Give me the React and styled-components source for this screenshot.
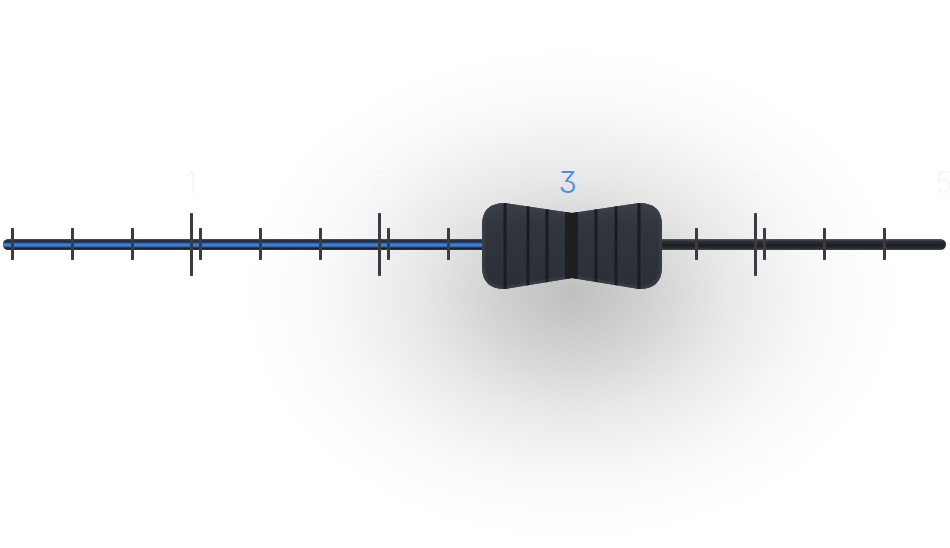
import React from "react";
import styled, { createGlobalStyle } from "styled-components";

const GlobalStyle = createGlobalStyle`
  html, body {
    margin: 0;
    padding: 0;
    background: #ffffff;
    overflow: hidden;
  }
`;

const MAX = 5;
const VALUE = 3;
const SCALE_WIDTH = 941;
const STEP = SCALE_WIDTH / MAX;
const THUMB_W = 182;

const pos = (v) => (v / MAX) * SCALE_WIDTH;

const Page = styled.div`
  width: 950px;
  height: 548px;
  overflow: hidden;
  font-family: Inter, "Noto Sans", sans-serif;
`;

const Scale = styled.div`
  margin: 0 4px 0 3px;
  padding-top: 162px;
  display: flex;
  flex-direction: column;
  gap: 10px;
`;

const LabelRow = styled.div`
  display: grid;
  grid-template-columns: repeat(${MAX}, ${STEP}px);
  height: 40px;
  position: relative;
  z-index: 2;
`;

const LabelCell = styled.div`
  display: flex;
  justify-content: flex-end;
`;

const Label = styled.span`
  transform: translateX(50%);
  font-size: 30px;
  font-weight: 300;
  line-height: 40px;
  font-feature-settings: "cv09";
  color: ${(p) => (p.$active ? "#4a8fe6" : "rgba(246, 246, 246, 0.9)")};
`;

const TrackArea = styled.div`
  display: grid;
  grid-template-rows: 64px;
  grid-template-columns: minmax(0, 1fr);
  align-items: center;
  justify-items: start;

  & > * {
    grid-area: 1 / 1;
  }
`;

const Glow = styled.div`
  width: 660px;
  height: 620px;
  align-self: center;
  background: radial-gradient(
    ellipse 50% 40% at 50% 58%,
    rgba(0, 0, 0, 0.25) 0%,
    rgba(0, 0, 0, 0.18) 22%,
    rgba(0, 0, 0, 0.085) 48%,
    rgba(0, 0, 0, 0.025) 75%,
    rgba(0, 0, 0, 0) 100%
  );
`;

const Track = styled.div`
  width: 100%;
  height: 11px;
  border-radius: 6px;
  background: linear-gradient(
    to bottom,
    #5a5d62 0%,
    #2b2e33 22%,
    #1d1f23 60%,
    #2a2d31 85%,
    #4a4d52 100%
  );
  overflow: hidden;
`;

const Fill = styled.div`
  height: 100%;
  background: linear-gradient(
    to bottom,
    #4b5058 0%,
    #1f2630 22%,
    #2b64b3 40%,
    #4a8ee0 55%,
    #2a5ca4 70%,
    #1a1f27 85%,
    #3a3d42 100%
  );
`;

const TickRow = styled.div`
  display: flex;
  align-items: center;
  height: 64px;
  --tick: ${(p) => (p.$over ? "rgba(58, 61, 66, 0.55)" : "#3a3d42")};
`;

const Segment = styled.div`
  position: relative;
  flex: 0 0 ${STEP}px;
  height: 100%;
  display: flex;
  align-items: center;
  gap: 57px;
  padding-left: 7.5px;
  box-sizing: border-box;

  &::before {
    content: "";
    display: ${(p) => (p.$major ? "block" : "none")};
    position: absolute;
    left: -1.5px;
    top: 0.5px;
    width: 3px;
    height: 63px;
    border-radius: 1px;
    background: var(--tick);
  }
`;

const Tick = styled.div`
  flex: 0 0 3px;
  height: 32px;
  border-radius: 1px;
  background: var(--tick);
`;

const Thumb = styled.svg`
  position: relative;
  z-index: 1;
  width: ${THUMB_W}px;
  height: 92px;
  margin-top: 2px;
  overflow: visible;
`;

const THUMB_PATH =
  "M 1 26 Q 1 4 24 4 L 91 14 L 158 4 Q 181 4 181 26 L 181 68 Q 181 90 158 90 L 91 79 L 24 90 Q 1 90 1 68 Z";

const stripes = [24, 47, 66, 115, 135, 158];

const ThumbShape = () => (
  <>
    <defs>
      <clipPath id="thumbClip">
        <path d={THUMB_PATH} />
      </clipPath>
      <linearGradient id="thumbBody" x1="0" y1="0" x2="0" y2="1">
        <stop offset="0" stopColor="#3a3f48" />
        <stop offset="0.25" stopColor="#30353e" />
        <stop offset="1" stopColor="#2b3038" />
      </linearGradient>
    </defs>
    <path d={THUMB_PATH} fill="url(#thumbBody)" />
    <g clipPath="url(#thumbClip)">
      <path
        d={THUMB_PATH}
        fill="none"
        stroke="#3b404a"
        strokeWidth="6"
        opacity="0.7"
      />
      {stripes.map((x) => (
        <rect key={x} x={x - 1.5} y="0" width="3" height="92" fill="#1a1c1e" />
      ))}
      <rect x="84" y="0" width="13" height="92" fill="#1e1f1e" />
    </g>
  </>
);

const Ticks = ({ over }) => (
  <TickRow $over={over}>
    {Array.from({ length: MAX }, (_, s) => (
      // the last major would sit on the rounded end, the reference hides it
      <Segment key={s} $major={s > 0}>
        <Tick />
        <Tick />
        <Tick />
      </Segment>
    ))}
  </TickRow>
);

export default function App() {
  const x = pos(VALUE);
  return (
    <Page>
      <GlobalStyle />
      <Scale>
        <LabelRow>
          {[1, 2, 3, 4, 5].map((v) => (
            <LabelCell key={v}>
              <Label $active={v === VALUE}>{v}</Label>
            </LabelCell>
          ))}
        </LabelRow>
        <TrackArea>
          <Glow style={{ marginLeft: x + 4 - 330 }} />
          <Ticks />
          <Track>
            <Fill style={{ width: x - 80 }} />
          </Track>
          <Ticks over />
          <Thumb viewBox="0 0 182 92" style={{ marginLeft: x - 87 }}>
            <ThumbShape />
          </Thumb>
        </TrackArea>
      </Scale>
    </Page>
  );
}
